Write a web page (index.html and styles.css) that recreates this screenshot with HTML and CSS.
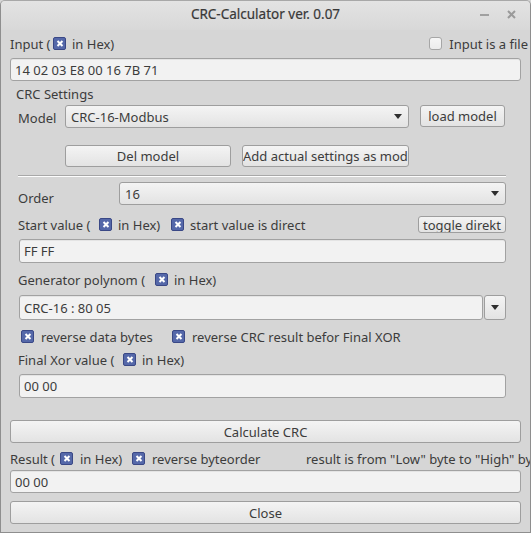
FILE: index.html
```html
<!DOCTYPE html>
<html>
<head>
<meta charset="utf-8">
<link rel="stylesheet" href="styles.css">
</head>
<body>
<div class="window">
  <div class="titlebar">
    <span class="title">CRC-Calculator ver. 0.07</span>
    <span class="wbtns"><span class="wmin"></span><svg class="wclose" width="9" height="9" viewBox="0 0 9 9"><path d="M1 1L8 8M8 1L1 8" stroke="#9a9a9a" stroke-width="2"/></svg></span>
  </div>
  <div class="content">
    <div class="row r-input">
      <span class="w-input">Input (</span><span class="cb on"></span><span>in Hex)</span>
      <span class="fileopt"><span class="cb off"></span><span>Input is a file</span></span>
    </div>
    <div class="field f-input">14 02 03 E8 00 16 7B 71</div>

    <div class="group">
      <div class="gtitle">CRC Settings</div>
      <div class="row r-model">
        <span class="lbl-model">Model</span>
        <div class="combo c-model"><span>CRC-16-Modbus</span><span class="arrow"></span></div>
        <button class="btn b-load">load model</button>
      </div>
      <div class="row r-del">
        <button class="btn b-del">Del model</button>
        <button class="btn b-add"><span>Add actual settings as model</span></button>
      </div>
      <div class="sep"></div>
      <div class="row r-order">
        <span class="lbl-order">Order</span>
        <div class="combo c-order"><span>16</span><span class="arrow"></span></div>
      </div>
      <div class="row r-start">
        <span class="w-start">Start value (</span><span class="cb on"></span><span class="w-hex1">in Hex)</span><span class="cb on"></span><span>start value is direct</span>
        <button class="btn b-toggle">toggle direkt</button>
      </div>
      <div class="field f-start">FF FF</div>
      <div class="row r-gen">
        <span class="w-gen">Generator polynom (</span><span class="cb on"></span><span>in Hex)</span>
      </div>
      <div class="row r-poly">
        <div class="field f-poly">CRC-16 : 80 05</div>
        <button class="btn b-drop"><span class="arrow"></span></button>
      </div>
      <div class="row r-rev">
        <span class="cb on"></span><span class="w-rev">reverse data bytes</span><span class="cb on"></span><span>reverse CRC result befor Final XOR</span>
      </div>
      <div class="row r-xor">
        <span class="w-xor">Final Xor value (</span><span class="cb on"></span><span>in Hex)</span>
      </div>
      <div class="field f-xor">00 00</div>
    </div>

    <button class="btn b-wide b-calc">Calculate CRC</button>
    <div class="row r-result">
      <span class="res-left"><span class="w-res">Result (</span><span class="cb on"></span><span class="w-hex2">in Hex)</span><span class="cb on"></span><span>reverse byteorder</span></span>
      <span class="note">result is from "Low" byte to "High" byte</span>
    </div>
    <div class="field f-result">00 00</div>
    <button class="btn b-wide b-close">Close</button>
  </div>
</div>
</body>
</html>
```
FILE: styles.css
```css
* { box-sizing: border-box; }
html, body { margin: 0; padding: 0; background: #d6d6d6; }
body {
  font-family: "Noto Sans", "DejaVu Sans", sans-serif;
  font-size: 13px;
  line-height: 16px;
  color: #3c3c3c;
}
.window {
  width: 531px;
  height: 533px;
  border: 1px solid #8e8e8e;
  border-top-color: #a8a8a8;
  border-radius: 5px 5px 0 0;
  background: #d6d6d6;
  overflow: hidden;
  display: flex;
  flex-direction: column;
}
.titlebar {
  height: 29px;
  flex: none;
  background: linear-gradient(#e3e3e3, #d8d8d8);
  display: flex;
  align-items: center;
  justify-content: center;
  position: relative;
}
.title { font-size: 13.5px; color: #383838; margin-top: -3px; -webkit-text-stroke: 0.2px #383838; }
.wbtns {
  position: absolute;
  right: 14px;
  top: 9px;
  display: flex;
  align-items: center;
  gap: 18px;
}
.wmin { width: 9px; height: 2px; background: #a0a0a0; }
.wclose { display: block; }

.content {
  padding: 0 9px;
  display: flex;
  flex-direction: column;
}
.row { display: flex; align-items: center; white-space: nowrap; flex: none; }
.row > span, .res-left > span { flex: none; }
.cb {
  width: 13px; height: 13px;
  border-radius: 2px;
  flex: none;
  display: inline-block;
  margin-right: 6px;
  position: relative;
}
.cb.on {
  background: #5568a9;
  border: 1px solid #3a4886;
}
.cb.on::before, .cb.on::after {
  content: "";
  position: absolute;
  left: 4.5px;
  top: 2px;
  width: 2px;
  height: 7px;
  background: #ffffff;
  transform: rotate(45deg);
}
.cb.on::after { transform: rotate(-45deg); }
.cb.off {
  background: linear-gradient(#f6f6f6, #ececec);
  border: 1px solid #a6a6a6;
  border-radius: 3px;
}
.field {
  background: #f2f2f2;
  border: 1px solid #a2a2a2;
  border-radius: 3px;
  padding: 0 4px;
  display: flex;
  align-items: center;
  white-space: nowrap;
  flex: none;
  box-shadow: inset 0 1px 0 #e4e4e4;
}
.btn {
  font: inherit;
  color: #3c3c3c;
  background: linear-gradient(#f4f4f4, #e3e3e3);
  border: 1px solid #9e9e9e;
  border-radius: 3px;
  padding: 0;
  display: flex;
  align-items: center;
  justify-content: center;
  white-space: nowrap;
  overflow: hidden;
  flex: none;
}
.combo {
  background: linear-gradient(#f4f4f4, #e3e3e3);
  border: 1px solid #9e9e9e;
  border-radius: 3px;
  display: flex;
  align-items: center;
  padding: 0 6px 0 5px;
  justify-content: space-between;
}
.arrow {
  width: 0; height: 0;
  border-left: 4px solid transparent;
  border-right: 4px solid transparent;
  border-top: 5px solid #2e2e2e;
}

.r-input { height: 13px; margin-top: 7px; }
.w-input { width: 43px; }
.fileopt { margin-left: auto; margin-right: -7px; display: flex; align-items: center; }
.fileopt .cb { margin-right: 7px; }
.f-input { height: 23px; margin-top: 8px; }

.group { padding: 0 15px 0 8px; display: flex; flex-direction: column; }
.gtitle { margin-top: 7px; height: 13px; line-height: 13px; margin-left: -2px; }
.r-model { margin-top: 4px; height: 23px; }
.lbl-model { width: 47px; padding-top: 3px; }
.c-model { width: 344px; height: 23px; flex: none; }
.b-load { width: 85px; height: 22px; margin-left: 11px; align-self: flex-start; }
.r-del { margin-top: 17px; height: 22px; padding-left: 47px; }
.b-del { width: 166px; height: 22px; }
.b-add { width: 167px; height: 22px; margin-left: 11px; justify-content: flex-start; }
.sep { height: 2px; margin-top: 8px; border-top: 1px solid #a8a8a8; border-bottom: 1px solid #fdfdfd; flex: none; }
.r-order { margin-top: 5px; height: 23px; }
.lbl-order { width: 101px; padding-top: 8px; }
.c-order { flex: 1; height: 23px; }
.r-start { margin-top: 11px; height: 17px; }
.w-start { width: 81px; }
.w-hex1 { width: 53px; }
.b-toggle { width: 88px; height: 17px; margin-left: auto; }
.f-start { height: 24px; margin-top: 6px; margin-left: 1px; }
.r-gen { margin-top: 10px; height: 13px; }
.w-gen { width: 137px; }
.r-poly { margin-top: 9px; height: 25px; }
.f-poly { flex: 1; height: 25px; margin-left: 1px; }
.b-drop { width: 22px; height: 25px; margin-left: 1px; }
.r-rev { margin-top: 10px; height: 13px; padding-left: 3px; }
.r-rev .cb { margin-right: 7px; }
.w-rev { width: 131px; }
.r-xor { margin-top: 10px; height: 13px; }
.w-xor { width: 105px; }
.f-xor { height: 24px; margin-top: 8px; margin-left: 1px; }

.b-wide { width: 100%; height: 23px; }
.b-calc { margin-top: 22px; }
.r-result { margin-top: 9px; height: 13px; }
.res-left { width: 296px; display: flex; align-items: center; flex: none; }
.w-res { width: 50px; }
.w-hex2 { width: 52px; }
.r-result .cb { margin-right: 7px; }
.f-result { height: 23px; margin-top: 5px; }
.b-close { margin-top: 8px; }
```
